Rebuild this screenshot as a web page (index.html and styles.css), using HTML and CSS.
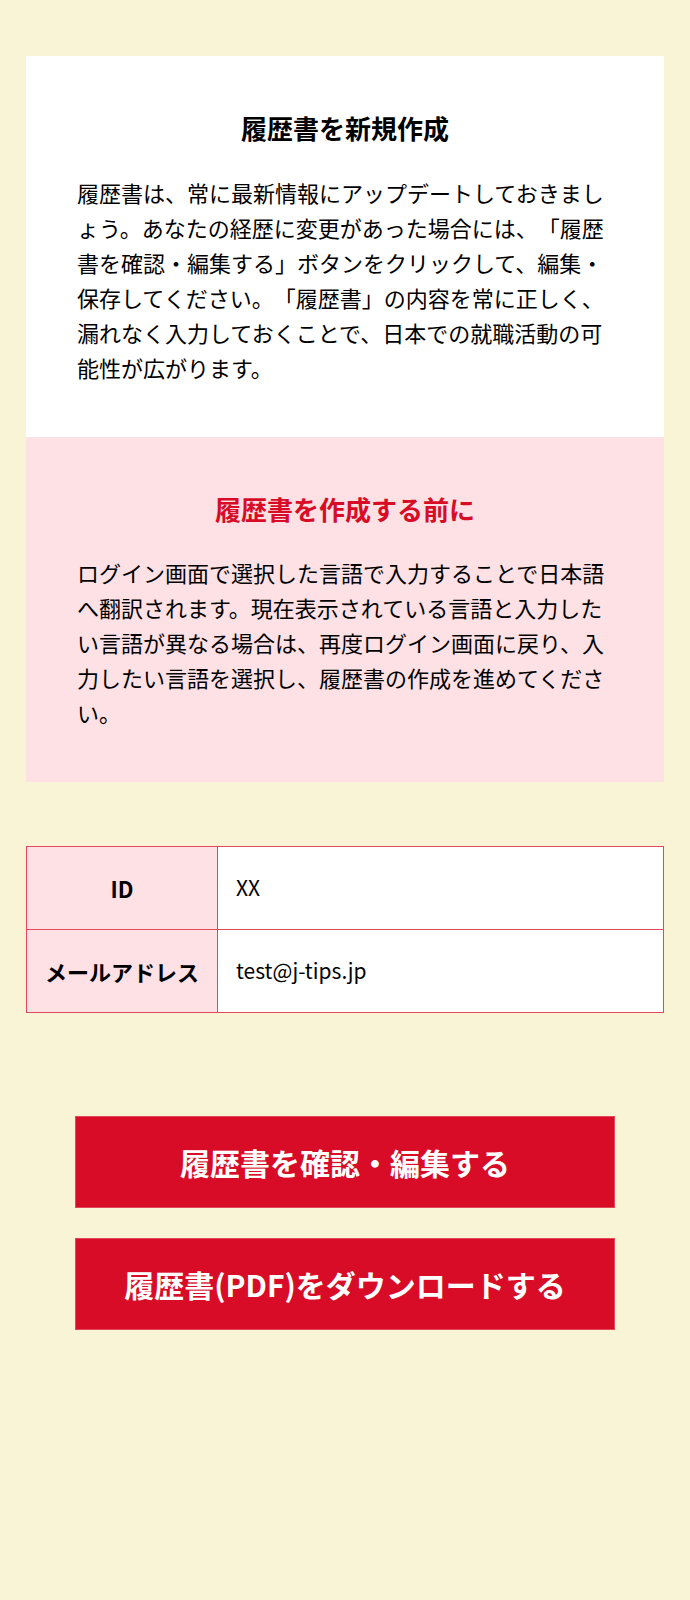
FILE: index.html
```html
<!DOCTYPE html>
<html lang="ja">
<head>
<meta charset="utf-8">
<title>履歴書</title>
<link rel="stylesheet" href="styles.css">
</head>
<body>
<main class="page">
  <section class="card">
    <div class="intro">
      <h1 class="intro-title">履歴書を新規作成</h1>
      <p class="text">履歴書は、常に最新情報にアップデートしておきましょう。あなたの経歴に変更があった場合には、「履歴書を確認・編集する」ボタンをクリックして、編集・保存してください。「履歴書」の内容を常に正しく、漏れなく入力しておくことで、日本での就職活動の可能性が広がります。</p>
    </div>
    <div class="notice">
      <h2 class="notice-title">履歴書を作成する前に</h2>
      <p class="text">ログイン画面で選択した言語で入力することで日本語へ翻訳されます。現在表示されている言語と入力したい言語が異なる場合は、再度ログイン画面に戻り、入力したい言語を選択し、履歴書の作成を進めてください。</p>
    </div>
  </section>

  <table class="info">
    <tr>
      <th class="info-label">ID</th>
      <td class="info-value">XX</td>
    </tr>
    <tr>
      <th class="info-label">メールアドレス</th>
      <td class="info-value">test@j-tips.jp</td>
    </tr>
  </table>

  <div class="actions">
    <a class="btn" href="#">履歴書を確認・編集する</a>
    <a class="btn" href="#">履歴書(PDF)をダウンロードする</a>
  </div>
</main>
</body>
</html>
```
FILE: styles.css
```css
html, body {
  margin: 0;
  padding: 0;
}
body {
  background: #faf4d7;
  font-family: "Noto Sans CJK JP", "Noto Sans", sans-serif;
  color: #000;
  min-height: 1600px;
  text-spacing-trim: space-all;
}
.page {
  padding: 56px 26px 0;
}
.card {
  display: flex;
  flex-direction: column;
}
.intro {
  background: #ffffff;
  padding: 51px 51px 52px;
}
.notice {
  background: #fde1e4;
  padding: 51px 51px 52px;
}
.intro-title,
.notice-title {
  margin: 0 0 26px;
  font-size: 26px;
  line-height: 1.6;
  font-weight: 700;
  text-align: center;
}
.notice-title {
  color: #d80c27;
}
.text {
  margin: 0;
  font-size: 22px;
  line-height: 35px;
  font-weight: 400;
  text-spacing-trim: space-all;
}
.info {
  margin-top: 64px;
  width: 100%;
  border-collapse: collapse;
  background: #ffffff;
}
.info-label,
.info-value {
  border: 1px solid #e4485b;
  height: 82px;
  font-size: 22px;
  line-height: 1.4;
  padding: 0 18px;
}
.info-label {
  width: 154px;
  background: #fde1e4;
  font-weight: 700;
  text-align: center;
}
.info-value {
  text-align: left;
  font-weight: 400;
  font-size: 21px;
}
.actions {
  margin-top: 103px;
  display: flex;
  flex-direction: column;
  align-items: center;
  gap: 30px;
}
.btn {
  width: 540px;
  height: 92px;
  box-sizing: border-box;
  display: flex;
  align-items: center;
  justify-content: center;
  background: #d80c27;
  border: 1px solid #e2475a;
  color: #ffffff;
  font-size: 30px;
  font-weight: 700;
  text-decoration: none;
}
```
